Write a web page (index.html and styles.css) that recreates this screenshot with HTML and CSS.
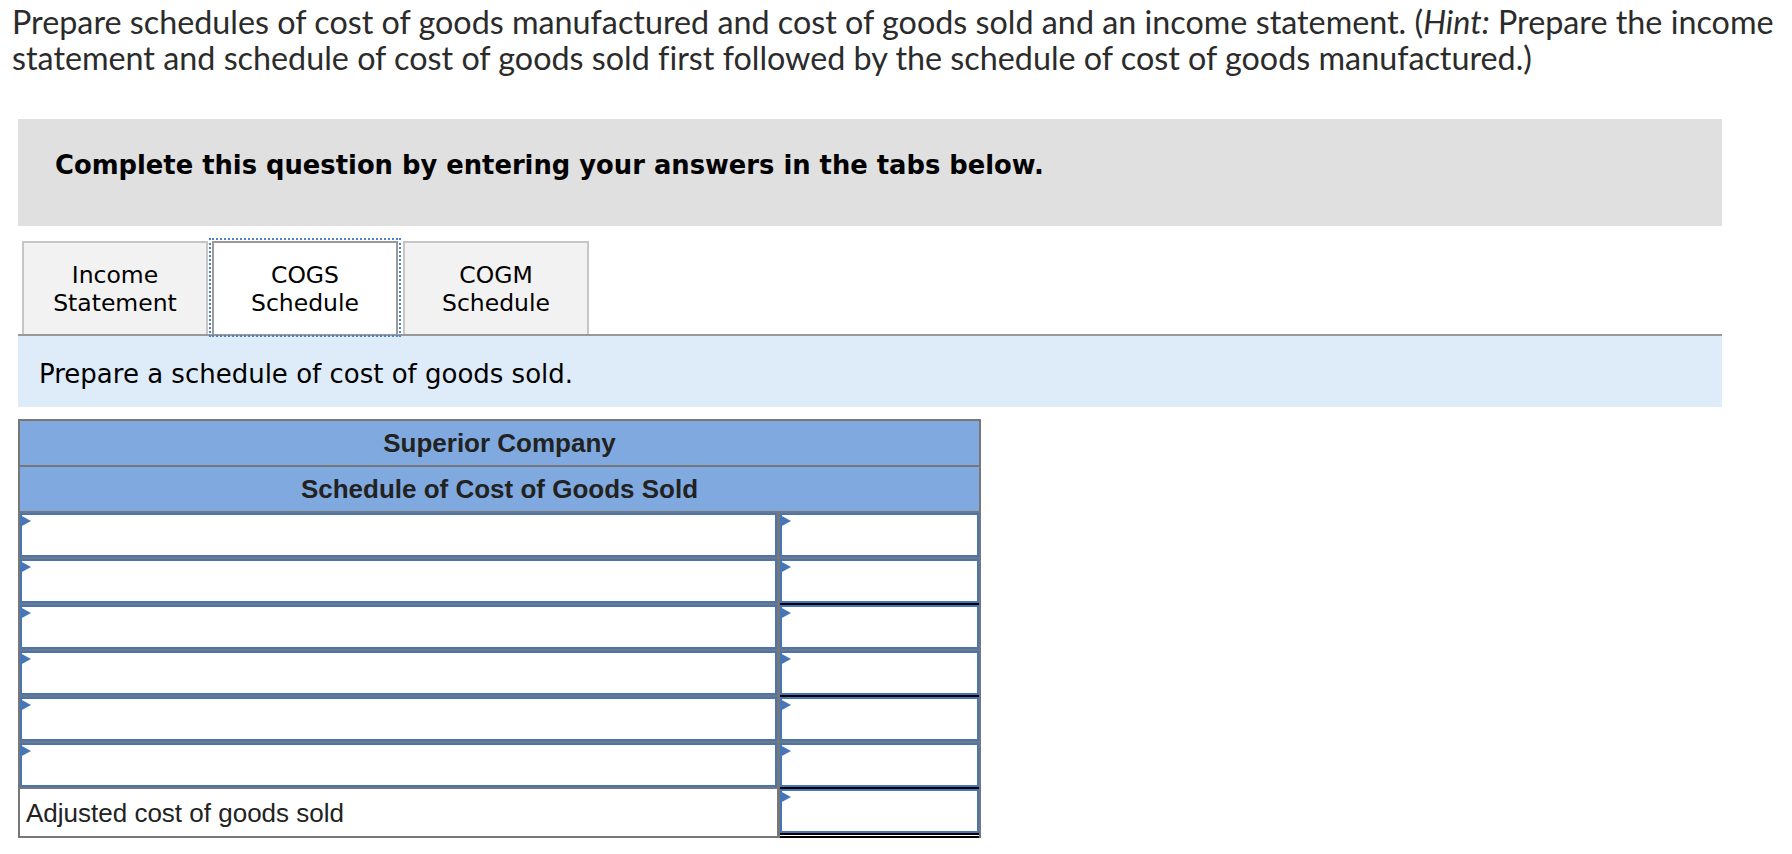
FILE: index.html
```html
<!DOCTYPE html>
<html lang="en">
<head>
<meta charset="utf-8">
<title>COGS Schedule</title>
<link rel="stylesheet" href="styles.css">
</head>
<body>
<div class="page">
  <p class="question">Prepare schedules of cost of goods manufactured and cost of goods sold and an income statement. (<em>Hint:</em> Prepare the income<br>statement and schedule of cost of goods sold first followed by the schedule of cost of goods manufactured.)</p>
  <div class="panel">
    <div class="banner">Complete this question by entering your answers in the tabs below.</div>
    <div class="tabs">
      <div class="tab">Income<br>Statement</div>
      <div class="tab active">COGS<br>Schedule</div>
      <div class="tab">COGM<br>Schedule</div>
    </div>
    <div class="instructions">Prepare a schedule of cost of goods sold.</div>
    <div class="sheet">
      <div class="head">Superior Company</div>
      <div class="head">Schedule of Cost of Goods Sold</div>
      <div class="row"><div class="cell"></div><div class="cell"></div></div>
      <div class="row"><div class="cell"></div><div class="cell under"></div></div>
      <div class="row"><div class="cell"></div><div class="cell"></div></div>
      <div class="row"><div class="cell"></div><div class="cell under"></div></div>
      <div class="row"><div class="cell"></div><div class="cell"></div></div>
      <div class="row"><div class="cell"></div><div class="cell under"></div></div>
      <div class="row total"><div class="label">Adjusted cost of goods sold</div><div class="cell double"></div></div>
    </div>
  </div>
</div>
</body>
</html>
```
FILE: styles.css
```css
html, body {
  margin: 0;
  padding: 0;
  background: #ffffff;
}

.page {
  padding: 4px 0 0 12px;
}

.question {
  margin: 0;
  font-family: Lato, "Open Sans", sans-serif;
  font-size: 32.3px;
  line-height: 36px;
  color: #2b2b2b;
  white-space: nowrap;
  font-variant-ligatures: none;
}

.question em {
  font-style: italic;
}

.panel {
  margin: 43px 0 0 6px;
  width: 1704px;
}

.banner {
  box-sizing: border-box;
  height: 107px;
  padding: 31px 37px 0;
  background: #e0e0e0;
  font-family: "DejaVu Sans", Verdana, sans-serif;
  font-weight: bold;
  font-size: 25.8px;
  line-height: 30px;
  color: #000;
}

.tabs {
  display: flex;
  gap: 4px;
  margin-top: 15px;
  padding-left: 4px;
}

.tab {
  box-sizing: border-box;
  width: 186px;
  height: 93px;
  display: flex;
  align-items: center;
  justify-content: center;
  text-align: center;
  background: #f2f2f2;
  border: 2px solid #c6c6c6;
  border-bottom: none;
  font-family: "DejaVu Sans", Verdana, sans-serif;
  font-size: 23.5px;
  line-height: 28px;
  color: #000;
}

.tab.active {
  position: relative;
  z-index: 1;
  background: #ffffff;
  border-color: #9a9a9a;
  outline: 2px dotted #4a82cc;
  outline-offset: 1px;
}

.tab.active + .tab {
  margin-left: 1px;
}

.instructions {
  box-sizing: border-box;
  height: 73px;
  padding: 23px 21px 0;
  background: #deebf8;
  border-top: 2px solid #999999;
  font-family: "DejaVu Sans", Verdana, sans-serif;
  font-size: 26px;
  line-height: 30px;
  color: #000;
}

.sheet {
  box-sizing: border-box;
  width: 963px;
  margin-top: 12px;
  border: 2px solid #777777;
  background: #777777;
  display: grid;
  row-gap: 2px;
  font-family: "Liberation Sans", Arial, sans-serif;
  color: #222;
}

.head {
  height: 44px;
  line-height: 44px;
  background: #80aadf;
  text-align: center;
  font-weight: bold;
  font-size: 26px;
}

.row {
  display: grid;
  grid-template-columns: 757px 199px;
  column-gap: 3px;
  height: 44px;
}

.row.total {
  height: 47px;
}

.cell {
  box-sizing: border-box;
  position: relative;
  height: 44px;
  background: #ffffff;
  border: 2px solid #4676b8;
}

.cell::before {
  content: "";
  position: absolute;
  left: -2px;
  top: 0;
  width: 0;
  height: 0;
  border-left: 11px solid #4676b8;
  border-top: 6.5px solid transparent;
  border-bottom: 6.5px solid transparent;
}

.cell.under {
  box-shadow: 0 2px 0 #000000;
}

.cell.double {
  box-shadow: 0 2px 0 #000000, 0 3px 0 #ffffff, 0 5px 0 #000000;
}

.label {
  background: #ffffff;
  padding: 4px 0 0 6px;
  font-size: 26px;
  line-height: 41px;
  white-space: nowrap;
}
```
